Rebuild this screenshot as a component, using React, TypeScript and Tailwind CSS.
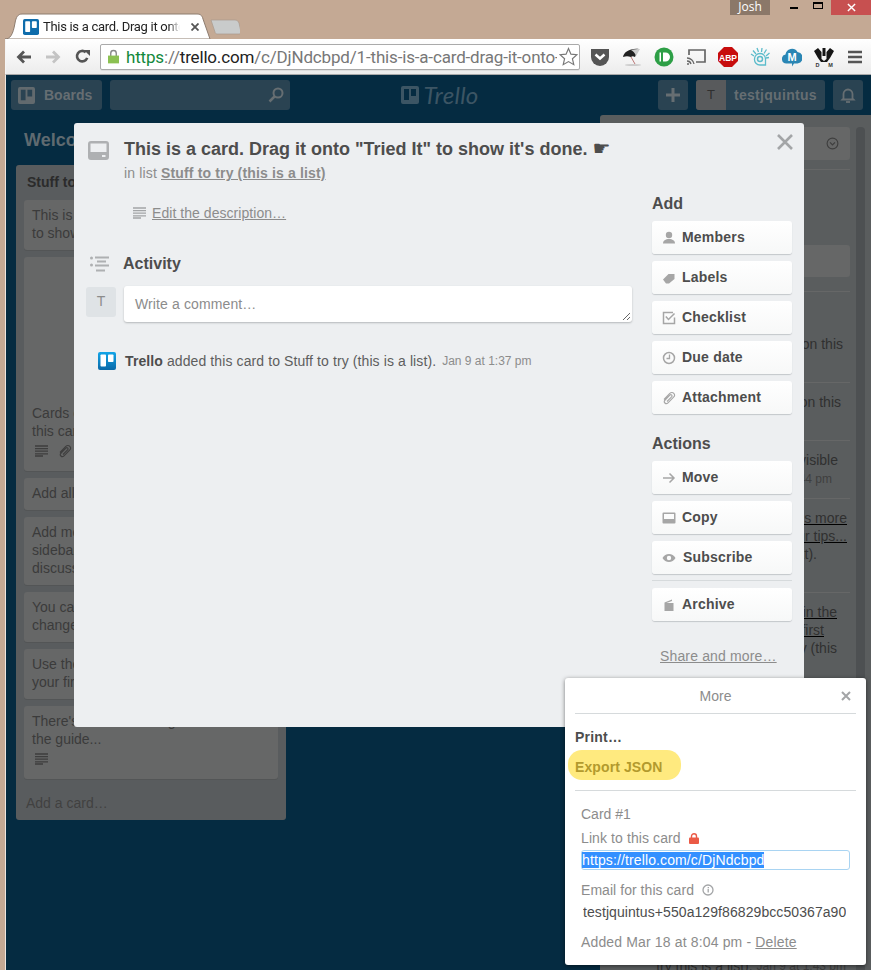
import React from 'react'

function TrelloMark({ className, bg, fg }: { className: string; bg: string; fg: string }) {
	return (
		<svg viewBox="0 0 18 18" className={className}>
			<rect width="18" height="18" rx="2" fill={bg} />
			<rect x="2.5" y="2.5" width="5.5" height="12" rx="0.8" fill={fg} />
			<rect x="10" y="2.5" width="5.5" height="7.5" rx="0.8" fill={fg} />
		</svg>
	)
}

function DescIcon({ color = '#999' }: { color?: string }) {
	return (
		<svg viewBox="0 0 13 12" className="w-[13px] h-[12px]">
			<path d="M0 1h13M0 3.600h13M0 6.200h13M0 8.800h13M0 11h8" stroke={color} strokeWidth="1.300" />
		</svg>
	)
}

function ClipIcon({ color = '#999' }: { color?: string }) {
	return (
		<svg viewBox="0 0 14 14" className="w-[14px] h-[14px]" fill="none">
			<path d="M2 8.500 7.800 2.400c1.300-1.300 3-1.200 4 0 1 1.100 1 2.600-.2 3.800L6 11.800c-1 1-2.300 1-3.100.2-.8-.8-.8-2 .2-3l4.800-4.800c.6-.6 1.300-.6 1.800-.1.500.5.500 1.200-.1 1.800L5 10.500" stroke={color} strokeWidth="1.100" />
		</svg>
	)
}

function BtnIcon({ name }: { name: string }) {
	const c = '#a6a6a6'
	if (name === 'Members') return (
		<svg viewBox="0 0 14 14" className="w-[14px] h-[14px]">
			<circle cx="7" cy="4" r="3.200" fill={c} />
			<path d="M1 12.500c0-3 2.500-4.500 6-4.500s6 1.500 6 4.500z" fill={c} />
		</svg>
	)
	if (name === 'Labels') return (
		<svg viewBox="0 0 14 14" className="w-[14px] h-[14px]">
			<path d="M1 8.500 6.500 3H12.500v5L7 12.500H4z" fill={c} />
		</svg>
	)
	if (name === 'Checklist') return (
		<svg viewBox="0 0 14 14" className="w-[14px] h-[14px]" fill="none">
			<path d="M12.500 6.500V12.500H1.500V1.500H11" stroke={c} strokeWidth="1.500" />
			<path d="M3.800 5.500 6.500 8.500 12.500 2.500" stroke={c} strokeWidth="1.500" />
		</svg>
	)
	if (name === 'Due date') return (
		<svg viewBox="0 0 14 14" className="w-[14px] h-[14px]" fill="none">
			<circle cx="7" cy="7" r="5.500" stroke={c} strokeWidth="1.500" />
			<path d="M7.500 3.500V7.500H4.500" stroke={c} strokeWidth="1.300" />
		</svg>
	)
	if (name === 'Attachment') return <ClipIcon color={c} />
	if (name === 'Move') return (
		<svg viewBox="0 0 14 14" className="w-[14px] h-[14px]" fill="none">
			<path d="M1 7h11M7.500 2.500 12 7l-4.500 4.500" stroke={c} strokeWidth="1.500" />
		</svg>
	)
	if (name === 'Copy') return (
		<svg viewBox="0 0 14 14" className="w-[14px] h-[14px]">
			<path fillRule="evenodd" d="M1.500 1.500h11a1 1 0 0 1 1 1v9a1 1 0 0 1-1 1h-11a1 1 0 0 1-1-1v-9a1 1 0 0 1 1-1zM2 3v5h10V3z" fill={c} />
		</svg>
	)
	if (name === 'Subscribe') return (
		<svg viewBox="0 0 14 14" className="w-[14px] h-[14px]">
			<path fillRule="evenodd" d="M0.500 7C2 4.500 4.300 3 7 3s5 1.500 6.500 4C12 9.500 9.700 11 7 11S2 9.500.5 7zM7 4.800a2.200 2.200 0 1 0 0 4.400 2.200 2.200 0 0 0 0-4.400z" fill={c} />
		</svg>
	)
	return (
		<svg viewBox="0 0 14 14" className="w-[14px] h-[14px]">
			<path d="M2.500 4.500 10 1.500v1.500L4.500 5H11.500v8h-9z" fill={c} />
		</svg>
	)
}

function SideButton({ name, extraGap }: { name: string; extraGap?: boolean }) {
	return (
		<div className="h-[33px] rounded-[3px] bg-gradient-to-b from-white to-[#f7f8f8] shadow-[0_1px_1px_#c3c7ca] flex items-center pl-[10px]">
			<div className="w-[14px] flex justify-center"><BtnIcon name={name} /></div>
			<span className={`${extraGap ? 'ml-[7px]' : 'ml-[6px]'} text-[14px] font-bold tracking-[0.2px] text-[#4d4d4d]`}>{name}</span>
		</div>
	)
}

function Card({ lines, cover, icons }: { lines: string[]; cover?: boolean; icons?: 'desc' | 'both' }) {
	return (
		<div className="rounded-[3px] bg-[#666767] shadow-[0_1px_0_#535556] px-2 pt-[6px] pb-[8px] text-[14px] leading-[18px] text-[#3b3b3b] whitespace-nowrap overflow-hidden">
			{cover && <div className="h-[141px]" />}
			{lines.map((l) => <div key={l}>{l}</div>)}
			{icons && (
				<div className="flex items-center gap-[10px] pl-[3px] h-[18px] pt-[4px] mb-[5px]">
					<DescIcon color="#3e3e3e" />
					{icons === 'both' && <ClipIcon color="#3e3e3e" />}
				</div>
			)}
		</div>
	)
}

function MenuLine({ text, pr = 0 }: { text: string; pr?: number }) {
	return (
		<div className="flex justify-end h-[18px] leading-[18px] text-[14px] text-[#303030] whitespace-nowrap" style={{ paddingRight: pr }}>
			{text}
		</div>
	)
}

function Sidebar() {
	return (
		<aside className="w-[271px] bg-[#5a5d5e] rounded-tl-[3px] pt-3 flex">
			<div className="w-[250px] flex flex-col">
				<div className="h-[33px] shrink-0 rounded-[3px] bg-[#666767] flex items-center justify-end pr-[11px]">
					<svg viewBox="0 0 14 14" className="w-[13px] h-[13px]" fill="none">
						<circle cx="7" cy="7" r="5.800" stroke="#3e3e3e" strokeWidth="1.200" />
						<path d="M4.300 5.800 7 8.500l2.700-2.700" stroke="#3e3e3e" strokeWidth="1.300" />
					</svg>
				</div>
				<div className="h-px shrink-0 bg-[#666767] mt-[9px]" />
				<div className="h-[32px] shrink-0 rounded-[3px] bg-[#666767] mt-[75px]" />
				<div className="h-px shrink-0 bg-[#666767] mt-[14px]" />
				<div className="pt-[43px] h-[90px] shrink-0"><MenuLine text="added this card on this" pr={7} /></div>
				<div className="h-px shrink-0 bg-[#666767]" />
				<div className="pt-[10px] h-[57px] shrink-0"><MenuLine text="added this card on this" pr={9} /></div>
				<div className="h-px shrink-0 bg-[#666767]" />
				<div className="pt-[10px] h-[57px] shrink-0">
					<MenuLine text="made this card visible" pr={12} />
					<div className="flex justify-end h-[18px] leading-[20px] text-[12px] text-[#3f3f3f] pr-[18px]">Jan 9 at 1:44 pm</div>
				</div>
				<div className="h-px shrink-0 bg-[#666767]" />
				<div className="pt-[10px] h-[93px] shrink-0">
					<div className="underline">
						<MenuLine text="There is more" pr={3} />
						<MenuLine text="in our tips..." pr={3} />
					</div>
					<MenuLine text="(text)." pr={33} />
				</div>
				<div className="h-px shrink-0 bg-[#666767]" />
				<div className="pt-[10px] h-[72px] shrink-0">
					<div className="underline">
						<MenuLine text="Added in the" pr={13} />
						<MenuLine text="your first" pr={26} />
					</div>
					<MenuLine text="try (this" pr={13} />
				</div>
				<div className="h-[292px] shrink-0" />
				<div className="flex justify-end pr-[4px] h-[18px] shrink-0 leading-[18px] text-[14px] text-[#303030] whitespace-nowrap">
					try this is a list). <span className="ml-1 text-[12px] text-[#3f3f3f]">Jan 9 at 1:43 pm</span>
				</div>
			</div>
			<div className="ml-[6px] w-[9px] h-[843px] rounded-t-[4px] bg-[#4d5052]" />
		</aside>
	)
}

function List() {
	return (
		<div className="w-[270px] h-[655px] rounded-[3px] bg-[#595c5e] px-2 flex flex-col">
			<div className="h-[35px] pl-[3px] pt-[8px] text-[14px] leading-[18px] font-bold text-[#2b2b2b] whitespace-nowrap">Stuff to try (this is a list)</div>
			<div className="flex flex-col gap-[7px]">
				<Card lines={['This is a card. Drag it onto', "to show it's done."]} />
				<Card cover lines={['Cards can have pictures,', 'this card has one.']} icons="both" />
				<Card lines={['Add all the things']} />
				<Card lines={['Add members from the', 'sidebar to start the', 'discussion.']} />
				<Card lines={['You can also comment or', 'change the list.']} />
				<Card lines={['Use the guide to set up', 'your first board.']} />
				<Card lines={["There's a lot more on go", 'the guide...']} icons="desc" />
			</div>
			<div className="pt-[15px] pl-[2px] text-[14px] leading-[18px] text-[#414141]">Add a card…</div>
		</div>
	)
}

function HeaderBar() {
	return (
		<header className="h-10 shrink-0 flex items-center justify-between pl-[5px] pr-2">
			<div className="flex gap-2">
				<div className="w-[91px] h-[30px] rounded-[3px] bg-[#2a4352] flex items-center pl-[7px] gap-[9px]">
					<svg viewBox="0 0 18 18" className="w-[17px] h-[17px]">
						<path fillRule="evenodd" d="M2 0h14a2 2 0 0 1 2 2v14a2 2 0 0 1-2 2H2a2 2 0 0 1-2-2V2a2 2 0 0 1 2-2zm1 3v11h5V3zm7 0v7h5V3z" fill="#626a6e" />
					</svg>
					<span className="text-[14px] font-bold text-[#666e72]">Boards</span>
				</div>
				<div className="w-[180px] h-[30px] rounded-[3px] bg-[#2a4352] flex items-center justify-end pr-[6px]">
					<svg viewBox="0 0 16 16" className="w-4 h-4" fill="none">
						<circle cx="10" cy="6" r="4.500" stroke="#666e72" strokeWidth="2" />
						<path d="M6.500 9.500 1.500 14.500" stroke="#666e72" strokeWidth="2.500" />
					</svg>
				</div>
			</div>
			<div className="flex items-center gap-[4px] mr-[68px] text-[#3c5564]">
				<svg viewBox="0 0 18 18" className="w-[18px] h-[18px]">
					<path fillRule="evenodd" d="M2 0h14a2 2 0 0 1 2 2v14a2 2 0 0 1-2 2H2a2 2 0 0 1-2-2V2a2 2 0 0 1 2-2zm1 3v11h5V3zm7 0v7h5V3z" fill="#3c5564" />
				</svg>
				<span className="font-['Lato',sans-serif] italic text-[24px] leading-[30px] tracking-[0.3px]">Trello</span>
			</div>
			<div className="flex gap-2">
				<div className="w-[30px] h-[30px] rounded-[3px] bg-[#2a4352] flex items-center justify-center">
					<svg viewBox="0 0 16 16" className="w-4 h-4"><path d="M8 1v14M1 8h14" stroke="#666e72" strokeWidth="3" /></svg>
				</div>
				<div className="w-[129px] h-[30px] rounded-[3px] bg-[#2a4352] flex items-center overflow-hidden">
					<div className="w-[30px] h-[30px] bg-[#585a5c] flex items-center justify-center text-[13px] text-[#2f2f2f]">T</div>
					<span className="ml-2 text-[14px] font-bold tracking-[0.3px] text-[#666e72]">testjquintus</span>
				</div>
				<div className="w-[30px] h-[30px] rounded-[3px] bg-[#2a4352] flex items-center justify-center">
					<svg viewBox="0 0 16 16" className="w-4 h-4" fill="none">
						<path d="M3.500 11.500V7a4.500 4.500 0 0 1 9 0v4.500l1 1h-11z" stroke="#666e72" strokeWidth="1.800" />
						<path d="M6 15h4" stroke="#666e72" strokeWidth="1.800" />
					</svg>
				</div>
			</div>
		</header>
	)
}

function CardModal() {
	return (
		<div className="absolute left-[68px] top-[48px] w-[730px] h-[604px] rounded-[3px] bg-[#edeff1] text-[#8c8c8c]">
			<svg viewBox="0 0 21 19" className="absolute left-[14px] top-[18px] w-[21px] h-[19px]">
				<path fillRule="evenodd" d="M3 0h15a3 3 0 0 1 3 3v13a3 3 0 0 1-3 3H3a3 3 0 0 1-3-3V3a3 3 0 0 1 3-3zM2.500 2.500v8.500h16V2.500zM14 14v2h3.500v-2z" fill="#aeb0b2" />
			</svg>
			<button className="absolute right-[11px] top-[11px]" aria-label="Close">
				<svg viewBox="0 0 16 16" className="w-[16px] h-[16px]"><path d="M1 1l14 14M15 1 1 15" stroke="#a3a5a7" strokeWidth="2.600" /></svg>
			</button>
			<div className="flex pt-4 pl-[12px] pr-3">
				<div className="w-[566px]">
					<div className="pl-[38px]">
						<h2 className="text-[18px] leading-[20px] font-bold text-[#4d4d4d] whitespace-nowrap">This is a card. Drag it onto "Tried It" to show it's done. <span className="font-['DejaVu_Sans',sans-serif] font-normal text-[20px] leading-[0]">☛</span></h2>
						<div className="mt-[4px] text-[14px] leading-[20px] tracking-[0.15px]">in list <span className="font-bold underline">Stuff to try (this is a list)</span></div>
					</div>
					<div className="mt-[20px] pl-[47px] flex items-center gap-[6px] h-[20px]">
						<DescIcon color="#a3a5a7" />
						<span className="text-[14px] tracking-[0.05px] underline">Edit the description…</span>
					</div>
					<div className="mt-[31px] pl-[4px] flex items-center gap-[14px] h-[20px]">
						<svg viewBox="0 0 19 16" className="w-[19px] h-[16px]">
							<circle cx="1.500" cy="2" r="1.500" fill="#aeb0b2" /><circle cx="1.500" cy="9" r="1.500" fill="#aeb0b2" />
							<path d="M5 1.500h14M7 5.500h9M5 9.500h14M6 14.500h9" stroke="#aeb0b2" strokeWidth="2" />
						</svg>
						<h3 className="text-[16px] font-bold text-[#4d4d4d]">Activity</h3>
					</div>
					<div className="mt-[12px] flex gap-2">
						<div className="w-[30px] h-[30px] mt-px rounded-[3px] bg-[#dfe3e6] flex items-center justify-center pb-[2px] text-[14px] text-[#8c8c8c]">T</div>
						<div className="relative w-[508px] h-[36px] rounded-[3px] bg-white shadow-[0_1px_2px_#b5b8ba] pl-[11px] pt-[9px] text-[14px] leading-[18px] tracking-[0.12px]">
							Write a comment…
							<svg viewBox="0 0 9 9" className="absolute right-px bottom-px w-[9px] h-[9px]"><path d="M1 8 8 1M5 8l3-3" stroke="#555" strokeWidth="0.900" /></svg>
						</div>
					</div>
					<div className="mt-[30px] pl-[12px] flex items-center h-[18px]">
						<svg viewBox="0 0 18 18" className="w-[18px] h-[18px]">
							<defs><linearGradient id="mark" x1="0" y1="0" x2="0" y2="1"><stop offset="0" stopColor="#12a5e8" /><stop offset="1" stopColor="#0a69a8" /></linearGradient></defs>
							<rect width="18" height="18" rx="2" fill="url(#mark)" />
							<rect x="2.500" y="2.500" width="5.500" height="12" rx="0.800" fill="#fff" />
							<rect x="10" y="2.500" width="5.500" height="7.500" rx="0.800" fill="#fff" />
						</svg>
						<span className="ml-[9px] text-[14px] tracking-[0.1px] text-[#5e5e5e] whitespace-nowrap"><b className="text-[#4d4d4d]">Trello</b> added this card to Stuff to try (this is a list).</span>
						<span className="ml-[6px] text-[12px] text-[#8c8c8c] whitespace-nowrap">Jan 9 at 1:37 pm</span>
					</div>
				</div>
				<div className="w-[140px] pt-[55px]">
					<h3 className="text-[16px] leading-[20px] font-bold text-[#4d4d4d]">Add</h3>
					<div className="mt-[7px] flex flex-col gap-[7px]">
						{['Members', 'Labels', 'Checklist', 'Due date', 'Attachment'].map((n) => <SideButton key={n} name={n} />)}
					</div>
					<h3 className="mt-[20px] text-[16px] leading-[20px] font-bold text-[#4d4d4d]">Actions</h3>
					<div className="mt-[7px] flex flex-col gap-[7px]">
						<SideButton name="Move" />
						<SideButton name="Copy" />
						<SideButton name="Subscribe" extraGap />
					</div>
					<div className="h-px bg-[#d6dadc] mt-[6px]" />
					<div className="mt-[7px]"><SideButton name="Archive" /></div>
					<div className="mt-[26px] pl-2 text-[14px] leading-[18px] tracking-[0.15px] underline whitespace-nowrap">Share and more…</div>
				</div>
			</div>
		</div>
	)
}

function MorePopup() {
	return (
		<div className="absolute left-[559px] top-[603px] w-[301px] h-[287px] rounded-[3px] bg-white shadow-[0_1px_4px_rgba(0,0,0,0.5)] text-[14px] leading-[18px] text-[#8c8c8c]">
			<div className="relative h-[36px] mx-[10px] border-b border-[#d6dadc] flex items-center justify-center">
				More
				<svg viewBox="0 0 10 10" className="absolute right-[5px] top-[13px] w-[10px] h-[10px]"><path d="M1 1l8 8M9 1 1 9" stroke="#a3a5a7" strokeWidth="2" /></svg>
			</div>
			<div className="pl-[10px] pt-[14px] font-bold tracking-[0.2px] text-[#4d4d4d]">Print…</div>
			<div className="ml-[3px] mt-[4px] w-[113px] h-[30px] rounded-[14px] bg-[#ffea7f] pl-[7px] pt-[3px] flex items-center font-bold tracking-[0.1px] text-[#b39a2d]">Export JSON</div>
			<div className="mx-[10px] mt-[10px] h-px bg-[#d6dadc]" />
			<div className="pl-[16px] pt-[14px]">Card #1</div>
			<div className="pl-[16px] mt-[6px] flex items-center tracking-[0.1px]">
				Link to this card
				<svg viewBox="0 0 10 11" className="ml-[8px] w-[10px] h-[11px]">
					<path d="M2.500 5V3.200a2.500 2.500 0 0 1 5 0V5" fill="none" stroke="#eb5a46" strokeWidth="1.400" />
					<rect y="4.500" width="10" height="6.500" rx="1" fill="#eb5a46" />
				</svg>
			</div>
			<div className="ml-[16px] mt-[3px] w-[269px] h-[20px] rounded-[3px] border border-[#a9d4f2] flex items-center">
				<span className="bg-[#3390ff] text-white leading-[16px] tracking-[0.12px]">https://trello.com/c/DjNdcbpd</span>
			</div>
			<div className="pl-[16px] mt-[11px] flex items-center tracking-[0.05px]">
				Email for this card
				<svg viewBox="0 0 12 12" className="ml-[8px] w-3 h-3" fill="none">
					<circle cx="6" cy="6" r="5" stroke="#a3a5a7" strokeWidth="1.300" />
					<path d="M6.200 5v3.500M6.300 3v1.200" stroke="#a3a5a7" strokeWidth="1.300" />
				</svg>
			</div>
			<div className="ml-[18px] mt-[4px] w-[263px] overflow-hidden whitespace-nowrap text-[#4d4d4d] tracking-[0.08px]">testjquintus+550a129f86829bcc50367a90@boards.trello.com</div>
			<div className="pl-[16px] mt-[12px] tracking-[0.15px]">Added Mar 18 at 8:04 pm - <span className="underline">Delete</span></div>
		</div>
	)
}

function BrowserTop() {
	return (
		<div className="h-[39px] shrink-0 relative">
			<div className="absolute right-0 top-0 flex items-start">
				<div className="w-10 h-[15px] bg-[#8b7869] text-white text-[12px] leading-[14px] text-center font-['Open_Sans',sans-serif]">Josh</div>
				<div className="w-[61px] h-[15px] flex items-start">
					<div className="w-[8px] ml-[20px] mt-[7px] h-[2px] bg-black" />
					<div className="w-[10px] h-[7px] ml-[15px] mt-[2px] border border-black border-t-2" />
				</div>
				<div className="w-[40px] h-[15px] bg-[#c75050] flex items-center justify-center">
					<svg viewBox="0 0 10 10" className="w-[9px] h-[9px]"><path d="M1 1l8 8M9 1 1 9" stroke="#fff" strokeWidth="1.600" /></svg>
				</div>
			</div>
			<svg viewBox="0 0 240 26" className="absolute left-0 top-[13px] w-[240px] h-[26px]">
				<path d="M5 26C10 26 13 22 15 10 16 4 18 1 22 1H197c3 0 5 1 6 5l7 20z" fill="#fff" stroke="#8d7c6f" strokeWidth="1" />
				<path d="M211 7h24c2 0 3 1 4 3l2 9c0 1-1 2-2 2H217c-1 0-2-1-2-2l-4-12z" fill="#c9cbcb" stroke="#a99a8c" strokeWidth="0.700" />
			</svg>
			<div className="absolute left-[23px] top-[19px] flex items-center">
				<TrelloMark className="w-4 h-4" bg="#0e6cab" fg="#fff" />
				<div className="ml-[4px] w-[137px] overflow-hidden whitespace-nowrap text-[13px] leading-[16px] tracking-[-0.3px] text-[#222] font-['Roboto',sans-serif] [mask-image:linear-gradient(to_right,black_92%,transparent)]">This is a card. Drag it onto "Tried It"</div>
				<svg viewBox="0 0 8 8" className="ml-[11px] w-2 h-2"><path d="M.5.5l7 7M7.500.5l-7 7" stroke="#555" strokeWidth="1.800" /></svg>
			</div>
		</div>
	)
}

function ExtIcons() {
	return (
		<div className="flex items-center ml-[10px]">
			<svg viewBox="0 0 20 20" className="w-5 h-5"><path d="M1 2h18v8a9 9 0 0 1-18 0z" fill="#555" /><path d="M5.500 7.500 10 11.500l4.500-4" fill="none" stroke="#fff" strokeWidth="2.500" /></svg>
			<svg viewBox="0 0 20 20" className="ml-3 w-5 h-5"><path d="M1 10C2 5 8 1 17 2c-2 3-3 6-4 8-2-1-3-1-4 0-3-1-5-1-8 0z" fill="#222" /><path d="M9 3c3-1 6-1 9-1l-4 7c-1-3-3-5-5-6z" fill="#ccc" /><path d="M9 10l4 7" stroke="#b77" strokeWidth="1" /><ellipse cx="11" cy="18" rx="8" ry="1" fill="#ccc" /></svg>
			<svg viewBox="0 0 20 20" className="ml-3 w-5 h-5"><circle cx="10" cy="10" r="9.500" fill="#2d9f46" /><path d="M5.500 5.500h1.500v9H5.500zM9 5.500h2.500a4.500 4.500 0 0 1 0 9H9z" fill="#fff" /></svg>
			<svg viewBox="0 0 20 20" className="ml-3 w-5 h-5" fill="none"><path d="M3 8V3h16v12H10" stroke="#666" strokeWidth="1.700" /><path d="M1 11a7 7 0 0 1 7 6M1 14a4 4 0 0 1 4 3" stroke="#666" strokeWidth="1.300" /><circle cx="2" cy="17" r="1" fill="#666" /></svg>
			<svg viewBox="0 0 20 20" className="ml-3 w-5 h-5"><path d="M6 0h8l6 6v8l-6 6H6l-6-6V6z" fill="#c70d0d" /><text x="10" y="13.500" textAnchor="middle" fill="#fff" fontSize="8.500" fontWeight="700" fontFamily="Liberation Sans">ABP</text></svg>
			<svg viewBox="0 0 20 20" className="ml-3 w-5 h-5" fill="none"><circle cx="10" cy="12" r="2.500" stroke="#5cbccb" strokeWidth="1.500" /><path d="M4.500 12a5.500 5.500 0 0 1 11 0v6h-5.500a5.500 5.500 0 0 1-5.500-6z" stroke="#5cbccb" strokeWidth="1.300" /><path d="M1 7 4 9M3 3.500 6 7M7 1l1.500 4M12 1l-.5 4M16.500 2.500 14 6.500M19.500 6l-3.500 3M19 10.500l-3 .5" stroke="#5cbccb" strokeWidth="1.300" /></svg>
			<svg viewBox="0 0 20 20" className="ml-3 w-5 h-5"><path d="M4.500 16.500a4.500 4.500 0 0 1-1-8.900A6.500 6.500 0 0 1 15.500 5a5.800 5.800 0 0 1 0 11.500H12l-2 3v-3z" fill="#2a86b4" /><text x="10" y="14" textAnchor="middle" fill="#fff" fontSize="11" fontWeight="700" fontFamily="Liberation Sans">M</text></svg>
			<svg viewBox="0 0 20 20" className="ml-3 w-5 h-5"><path d="M0 4 4 1 7.500 5v7l2.500 2 2.500-2V5L16 1l4 3-4 7-3 4H7L4 11z" fill="#151515" /><path d="M8.500 1h3v8h-3z" fill="#151515" /><text x="3.500" y="19.800" fontSize="5.500" fontWeight="700" fill="#333" fontFamily="Liberation Sans" textAnchor="middle">D</text><text x="16.500" y="19.800" fontSize="5.500" fontWeight="700" fill="#333" fontFamily="Liberation Sans" textAnchor="middle">M</text></svg>
			<svg viewBox="0 0 14 14" className="ml-[14px] w-[14px] h-[14px]"><path d="M0 2h14M0 7h14M0 12h14" stroke="#555" strokeWidth="2.400" /></svg>
		</div>
	)
}

function Toolbar() {
	return (
		<div className="h-[36px] shrink-0 ml-[5px] flex items-center bg-gradient-to-b from-white to-[#ececec] border-l border-[#f5f5f5] border-b border-b-[#a8a8a8] pl-[10px]">
			<svg viewBox="0 0 16 14" className="w-[16px] h-[14px]"><path d="M15 7H3M8 1.500 2.500 7 8 12.500" fill="none" stroke="#555" strokeWidth="2.800" /></svg>
			<svg viewBox="0 0 16 14" className="ml-[13px] w-[16px] h-[14px]"><path d="M1 7h12M8 1.500 13.500 7 8 12.500" fill="none" stroke="#c4c4c4" strokeWidth="2.800" /></svg>
			<svg viewBox="0 0 16 16" className="ml-[14px] w-[15px] h-[15px]"><path d="M13 9.500A5.600 5.600 0 1 1 11.500 3.500" fill="none" stroke="#555" strokeWidth="2.800" /><path d="M9.500 1H16v6.500z" fill="#555" /></svg>
			<div className="ml-[10px] w-[480px] h-[26px] rounded-[2px] border border-[#aaa] bg-white flex items-center pl-[7px] shadow-[0_1px_0_#ddd]">
				<svg viewBox="0 0 12 15" className="w-[11px] h-[15px]">
					<path d="M3 7V4a3 3 0 0 1 6 0v3" fill="none" stroke="#888" strokeWidth="1.500" />
					<rect y="6.500" width="12" height="8.500" fill="#8cc152" />
				</svg>
				<div className="ml-[7px] w-[431px] overflow-hidden whitespace-nowrap text-[17px] leading-[24px] tracking-[-0.17px] font-['Roboto',sans-serif] text-[#777]">
					<span className="text-[#12883c]">https</span>://<span className="text-[#222]">trello.com</span>/c/DjNdcbpd/1-this-is-a-card-drag-it-onto-
				</div>
				<svg viewBox="0 0 18 18" className="ml-[2px] w-[19px] h-[19px]"><path d="M9 1.500 11.300 6.800 17 7.300 12.700 11.100 14 16.700 9 13.800 4 16.700 5.300 11.100 1 7.300 6.700 6.800z" fill="none" stroke="#777" strokeWidth="1.100" /></svg>
			</div>
			<ExtIcons />
		</div>
	)
}

function App() {
	return (
		<div className="w-[871px] h-[970px] overflow-hidden bg-[#c4a994] flex flex-col font-['Liberation_Sans',Arial,sans-serif]">
			<BrowserTop />
			<Toolbar />
			<div className="relative flex-1 min-h-0 ml-[5px] border-l border-[#efe6df] bg-[#052b41] flex flex-col">
				<HeaderBar />
				<div className="flex flex-1 min-h-0">
					<main className="flex-1 pl-[10px]">
						<h1 className="h-[50px] pt-[13px] pl-2 text-[18px] leading-[24px] font-bold text-[#5f6a70] whitespace-nowrap">Welcome Board</h1>
						<List />
					</main>
					<Sidebar />
				</div>
				<CardModal />
				<MorePopup />
			</div>
		</div>
	)
}

export default App
